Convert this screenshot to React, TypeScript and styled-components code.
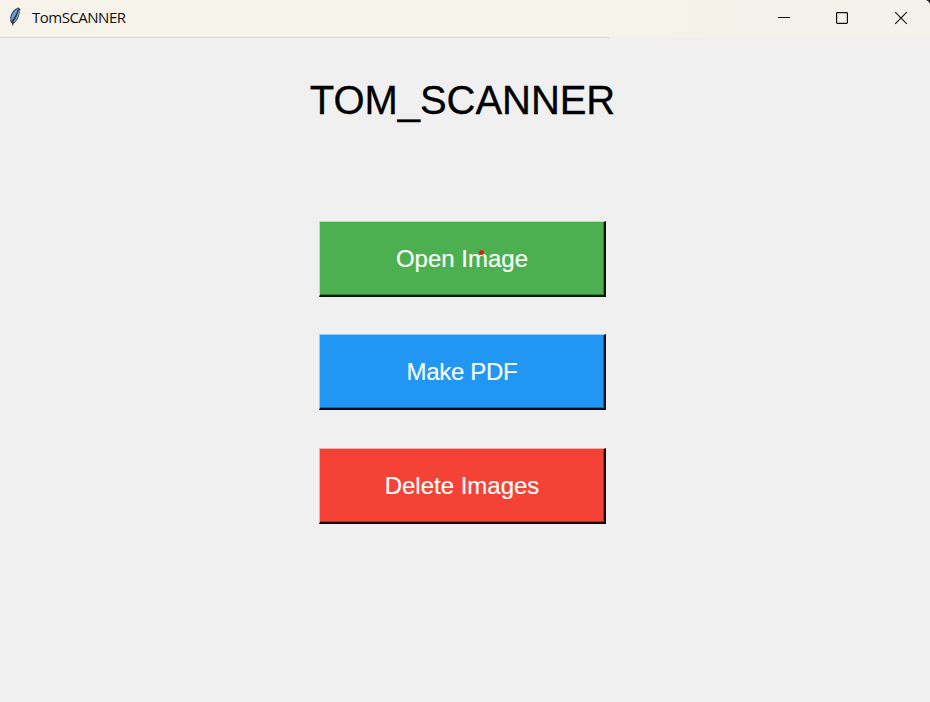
import React from "react";
import styled, { createGlobalStyle } from "styled-components";

const GlobalStyle = createGlobalStyle`
  html, body { margin: 0; padding: 0; background: #f0f0f0; }
`;

const Window = styled.div`
  display: flex;
  flex-direction: column;
  width: 930px;
  height: 702px;
  overflow: hidden;
  background: #f0f0f0;
`;

const TitleBar = styled.header`
  display: flex;
  align-items: center;
  flex: none;
  height: 37px;
  background: linear-gradient(90deg, #f7f3ea 0%, #f6f3ea 60%, #f3f3eb 85%);
`;

const Divider = styled.div`
  flex: none;
  width: 609px;
  height: 1px;
  background: #d9d9d8;
`;

const AppIcon = styled.svg`
  flex: none;
  width: 32px;
  height: 37px;
`;

const WindowTitle = styled.span`
  flex: 1;
  font: 15px/20px "Open Sans", sans-serif;
  letter-spacing: -0.5px;
  color: #111;
  padding-bottom: 4px;
`;

const Controls = styled.svg`
  flex: none;
  width: 170px;
  height: 37px;
`;

const Content = styled.main`
  display: flex;
  flex-direction: column;
  align-items: center;
  width: 925px;
`;

const Heading = styled.h1`
  margin: 39px 0 0;
  font: 400 40px/46px "Liberation Sans", Arial, sans-serif;
  letter-spacing: -0.05px;
  color: #000;
  -webkit-text-stroke: 0.3px #000;
`;

const ButtonList = styled.div`
  display: flex;
  flex-direction: column;
  gap: 37.4px;
  margin-top: 98px;
`;

const ActionButton = styled.button<{
  $face: string;
  $light: string;
  $shade: string;
  $edge: string;
  $tracking?: string;
}>`
  position: relative;
  box-sizing: border-box;
  width: 287px;
  height: 76px;
  margin: 0;
  padding: 1px 0 0;
  border-style: solid;
  border-width: 1px 2px 2px 1px;
  border-color: ${(p) => `${p.$light} ${p.$edge} ${p.$edge} ${p.$light}`};
  border-radius: 0;
  background: ${(p) => p.$face};
  font: 24px/28px "Liberation Sans", Arial, sans-serif;
  letter-spacing: ${(p) => p.$tracking ?? "0"};
  color: #f8fcf8;
  -webkit-text-stroke: 0.2px #f8fcf8;
  box-shadow: inset -1px -1px 0 ${(p) => p.$shade};
`;

const PointerDot = styled.i`
  position: absolute;
  left: 159px;
  top: 28px;
  width: 5px;
  height: 5px;
  border-radius: 50%;
  background: #d81e1c;
`;

export default function App() {
  return (
    <Window>
      <GlobalStyle />
      <TitleBar>
        <AppIcon viewBox="0 0 32 37">
          <path d="M18.6 7.4C14.7 8.2 11.2 12 10.2 17.2L10.4 22L13 24.2C17 21.5 19.4 17.2 20.4 9Z" fill="#3b4f66" />
          <path d="M18.2 8.4C14.6 10.2 12 13.6 11.2 17.8L11.5 20.8C14.7 17.3 17.2 12.8 18.2 8.4Z" fill="#6c9ed6" />
          <path d="M19.3 9.8C18.4 14.6 16.8 18.6 13.8 21.8" stroke="#7da3ca" strokeWidth="1.2" fill="none" />
          <path d="M18.5 9.4C17 14 14.8 18 12.8 21.5V25.6" stroke="#24282c" strokeWidth="0.9" fill="none" />
        </AppIcon>
        <WindowTitle>TomSCANNER</WindowTitle>
        <Controls viewBox="0 0 170 37" fill="none" stroke="#111" strokeWidth="1.2">
          <path d="M18 17.5H30" strokeWidth="1" />
          <rect x="76.6" y="12.6" width="10.8" height="10.8" rx="0.8" />
          <path d="M135.2 12.2L146.8 23.8M146.8 12.2L135.2 23.8" />
          <path d="M166 0H170V4C169.2 2 168 .8 166 0Z" fill="#222" stroke="none" />
        </Controls>
      </TitleBar>
      <Divider />
      <Content>
        <Heading>TOM_SCANNER</Heading>
        <ButtonList>
          <ActionButton $face="#4caf50" $light="#a9eaa9" $shade="#2f7a33" $edge="#061408">
            Open Image
            <PointerDot />
          </ActionButton>
          <ActionButton $face="#2196f3" $light="#92cdfb" $shade="#1769ac" $edge="#02101f" $tracking="-0.3px">
            Make PDF
          </ActionButton>
          <ActionButton $face="#f44336" $light="#fba9a2" $shade="#b02c23" $edge="#1c0403">
            Delete Images
          </ActionButton>
        </ButtonList>
      </Content>
    </Window>
  );
}
